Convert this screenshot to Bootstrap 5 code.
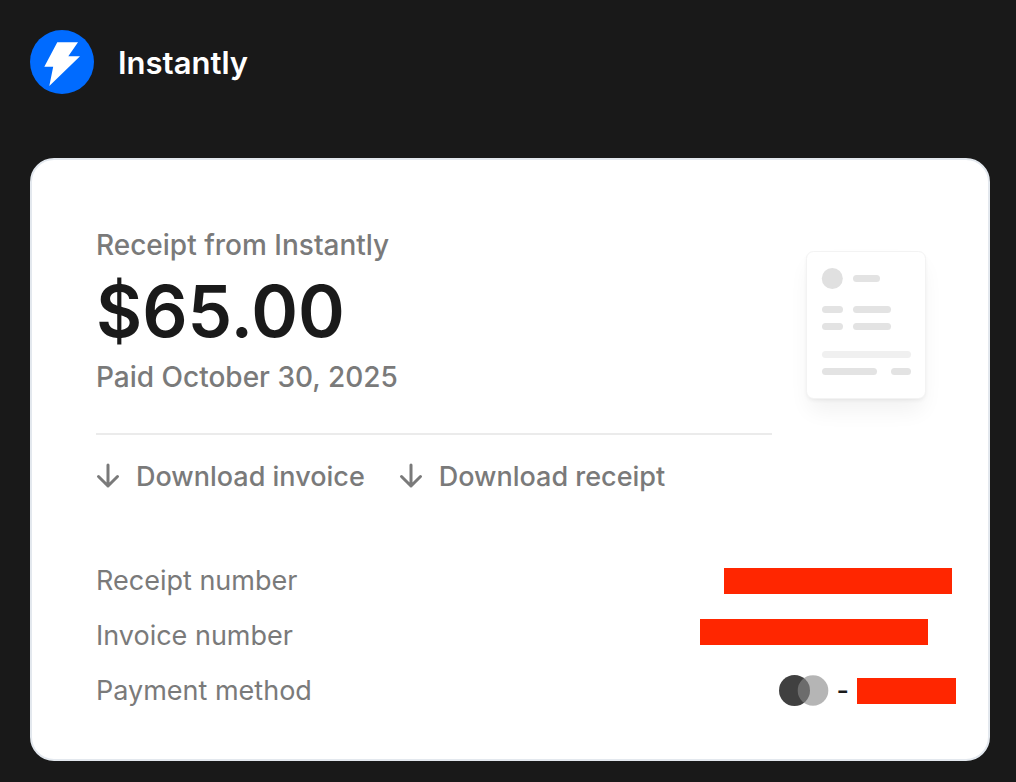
<!DOCTYPE html>
<html lang="en">
<head>
<meta charset="utf-8">
<meta name="viewport" content="width=device-width, initial-scale=1">
<title>Receipt from Instantly</title>
<link href="https://cdn.jsdelivr.net/npm/bootstrap@5.3.0/dist/css/bootstrap.min.css" rel="stylesheet">
<style>
  body { background: #191919; color: #1a1a1a; font-family: Inter, "Liberation Sans", sans-serif; font-size: 28px; line-height: 32px; }
  .page { padding: 30px 26px 20px 30px; }
  .brand { gap: 24px; margin-bottom: 64px; }
  .brand-name { color: #fff; font-size: 31px; line-height: 40px; font-weight: 600; padding-top: 2px; }
  .receipt { border: 2px solid #e3e8ee; border-radius: 24px; padding: 69px 32px 48px 64px; }
  .summary { padding-right: 30px; }
  .muted { color: #7a7a7a; }
  .amount { font-size: 71px; line-height: 80px; font-weight: 600; margin: 10px 0; }
  .rule { border: 0; border-top: 2px solid #ebebeb; opacity: 1; margin: 40px 0 26px; }
  .downloads { gap: 34px; font-size: 27px; }
  .downloads a { gap: 16px; }
  .details { gap: 15px; margin-top: 68px; font-size: 27px; }
  .details > div { height: 40px; }
  .redacted { background: #ff2600; width: 228px; height: 26px; }
  .redacted-invoice { margin: 0 28px 8px 0; }
  .redacted-card { width: 99px; }
</style>
</head>
<body>
<div class="page">
  <header class="brand d-flex align-items-center">
    <svg width="64" height="64" viewBox="0 0 64 64" role="img" aria-label="Instantly logo">
      <circle cx="32" cy="32" r="32" fill="#006bff"/>
      <path d="M27.3 12.3H48L38.3 26.3H50L19.3 56L23.2 36.7H14.3Z" fill="#fff"/>
    </svg>
    <span class="brand-name">Instantly</span>
  </header>

  <main class="receipt bg-white">
    <div class="summary d-flex align-items-start">
      <div class="flex-grow-1">
        <div class="muted fw-medium">Receipt from Instantly</div>
        <h1 class="amount">$65.00</h1>
        <div class="muted fw-medium">Paid October 30, 2025</div>
        <hr class="rule">
        <nav class="downloads d-flex flex-wrap" aria-label="Downloads">
          <a href="#" class="muted fw-medium text-decoration-none d-flex align-items-center">
            <svg width="24" height="32" viewBox="0 0 24 32" fill="none" stroke="#7a7a7a" stroke-width="3" stroke-linecap="round" stroke-linejoin="round" aria-hidden="true"><path d="M12 4V25M2.500 15.500L12 25L21.500 15.500"/></svg>
            Download invoice</a>
          <a href="#" class="muted fw-medium text-decoration-none d-flex align-items-center">
            <svg width="24" height="32" viewBox="0 0 24 32" fill="none" stroke="#7a7a7a" stroke-width="3" stroke-linecap="round" stroke-linejoin="round" aria-hidden="true"><path d="M12 4V25M2.500 15.500L12 25L21.500 15.500"/></svg>
            Download receipt</a>
        </nav>
      </div>
      <svg class="flex-shrink-0 overflow-visible" width="154" height="200" viewBox="0 0 154 200" aria-hidden="true">
        <defs>
          <filter id="soft" x="-40%" y="-40%" width="180%" height="180%"><feGaussianBlur stdDeviation="11"/></filter>
          <filter id="near" x="-20%" y="-20%" width="140%" height="140%"><feGaussianBlur stdDeviation="2"/></filter>
        </defs>
        <rect x="37" y="36" width="114" height="146" rx="8" fill="#000" opacity=".05" filter="url(#soft)"/>
        <rect x="35" y="25" width="118" height="146" rx="7" fill="#000" opacity=".07" filter="url(#near)"/>
        <rect x="34.500" y="22.500" width="119" height="147" rx="7" fill="#fff" stroke="#f3f3f3"/>
        <circle cx="60.300" cy="49.500" r="10.500" fill="#e0e0e0"/>
        <g fill="#e3e3e3">
          <rect x="81" y="46" width="27" height="7" rx="3.500"/>
          <rect x="50" y="77" width="21" height="7" rx="3.500"/>
          <rect x="81" y="77" width="38" height="7" rx="3.500"/>
          <rect x="50" y="94" width="21" height="7" rx="3.500"/>
          <rect x="81" y="94" width="38" height="7" rx="3.500"/>
          <rect x="50" y="122" width="89" height="7" rx="3.500" fill="#f0f0f0"/>
          <rect x="50" y="139" width="55" height="7" rx="3.500"/>
          <rect x="119" y="139" width="20" height="7" rx="3.500"/>
        </g>
      </svg>
    </div>

    <dl class="details d-flex flex-column mb-0">
      <div class="d-flex justify-content-between align-items-center">
        <dt class="muted fw-normal">Receipt number</dt>
        <dd class="redacted mb-0 me-1"></dd>
      </div>
      <div class="d-flex justify-content-between align-items-center">
        <dt class="muted fw-normal">Invoice number</dt>
        <dd class="redacted redacted-invoice"></dd>
      </div>
      <div class="d-flex justify-content-between align-items-center">
        <dt class="muted fw-normal">Payment method</dt>
        <dd class="d-flex align-items-center gap-2 mb-0 fw-medium">
          <svg width="50" height="32" viewBox="0 0 50 32" role="img" aria-label="Mastercard">
            <circle cx="15.500" cy="15.500" r="15.500" fill="#404040"/>
            <circle cx="34" cy="15.500" r="15.300" fill="#888" opacity=".62"/>
          </svg>
          <span>-</span>
          <span class="redacted redacted-card"></span>
        </dd>
      </div>
    </dl>
  </main>
</div>
<script src="https://cdn.jsdelivr.net/npm/bootstrap@5.3.0/dist/js/bootstrap.bundle.min.js"></script>
</body>
</html>
